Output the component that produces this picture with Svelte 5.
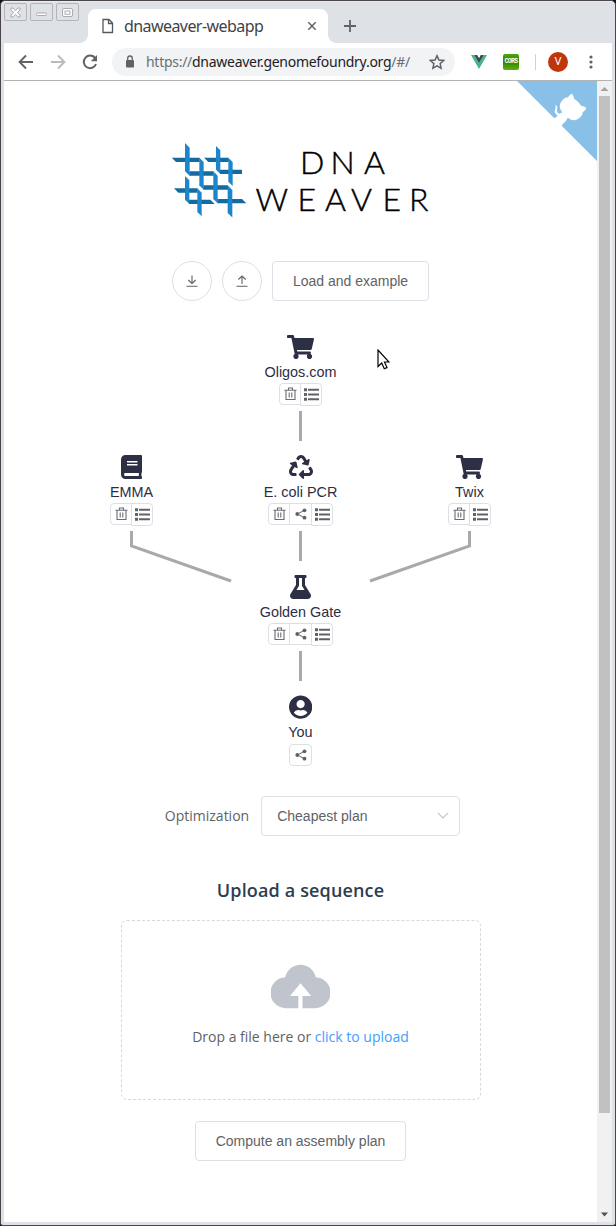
<script>
  const icons = {
    cart: { box: '0 0 576 512', w: 27, d: 'M528.12 301.319l47.273-208C578.806 78.301 567.391 64 551.99 64H159.208l-9.166-44.81C147.758 8.021 137.93 0 126.529 0H24C10.745 0 0 10.745 0 24v16c0 13.255 10.745 24 24 24h69.883l70.248 343.435C147.325 417.1 136 435.222 136 456c0 30.928 25.072 56 56 56s56-25.072 56-56c0-15.674-6.447-29.835-16.824-40h209.647C430.447 426.165 424 440.326 424 456c0 30.928 25.072 56 56 56s56-25.072 56-56c0-22.172-12.888-41.332-31.579-50.405l5.517-24.276c3.413-15.018-8.002-29.319-23.403-29.319H218.117l-6.545-32h293.145c11.206 0 20.92-7.754 23.403-18.681z' },
    book: { box: '0 0 448 512', w: 21, d: 'M448 360V24c0-13.3-10.7-24-24-24H96C43 0 0 43 0 96v320c0 53 43 96 96 96h328c13.3 0 24-10.7 24-24v-16c0-7.5-3.5-14.3-8.9-18.7-4.2-15.4-4.2-59.3 0-74.7 5.4-4.3 8.9-11.1 8.9-18.6zM128 134c0-3.3 2.7-6 6-6h212c3.3 0 6 2.7 6 6v20c0 3.3-2.7 6-6 6H134c-3.3 0-6-2.7-6-6v-20zm0 64c0-3.3 2.7-6 6-6h212c3.3 0 6 2.7 6 6v20c0 3.3-2.7 6-6 6H134c-3.3 0-6-2.7-6-6v-20zm253.4 250H96c-17.7 0-32-14.3-32-32 0-17.6 14.4-32 32-32h285.4c-1.9 17.1-1.9 46.9 0 64z' },
    recycle: { box: '0 0 512 512', w: 24, d: 'M184.561 261.903c3.232 13.997-12.123 24.635-24.068 17.168l-40.736-25.455-50.867 81.402C55.606 356.273 70.96 384 96.012 384H148c6.627 0 12 5.373 12 12v40c0 6.627-5.373 12-12 12H96.115c-75.334 0-121.302-83.048-81.408-146.88l50.822-81.388-40.725-25.448c-12.081-7.547-8.966-25.961 4.879-29.158l110.237-25.45c8.611-1.988 17.201 3.381 19.189 11.99l25.452 110.237zm98.561-182.915l41.289 66.076-40.74 25.457c-12.051 7.528-9 25.953 4.879 29.158l110.237 25.45c8.672 1.999 17.215-3.438 19.189-11.99l25.45-110.237c3.197-13.844-11.99-24.719-24.068-17.168l-40.687 25.424-41.263-66.082c-37.521-60.033-125.209-60.171-162.816 0l-17.963 28.766c-3.51 5.62-1.8 13.021 3.82 16.533l33.919 21.195c5.62 3.512 13.024 1.803 16.536-3.817l17.961-28.743c12.712-20.341 41.973-19.676 54.257-.022zM497.288 301.12l-27.515-44.065c-3.511-5.623-10.916-7.334-16.538-3.821l-33.861 21.159c-5.62 3.512-7.33 10.915-3.818 16.536l27.564 44.112c13.257 21.211-2.057 48.96-27.136 48.96H320V336.02c0-14.213-17.242-21.383-27.313-11.313l-80 79.981c-6.249 6.248-6.249 16.379 0 22.627l80 79.989C302.689 517.308 320 510.3 320 495.989V448h95.88c75.274 0 121.335-82.997 81.408-146.88z' },
    flask: { box: '0 0 448 512', w: 21, d: 'M437.2 403.5L320 215V64h8c13.3 0 24-10.7 24-24V24c0-13.3-10.7-24-24-24H120c-13.3 0-24 10.7-24 24v16c0 13.3 10.7 24 24 24h8v151L10.8 403.5C-18.5 450.6 15.3 512 70.9 512h306.2c55.7 0 89.4-61.5 60.1-108.5zM137.9 320l48.2-77.6c3.7-5.2 5.8-11.6 5.8-18.4V64h64v160c0 6.9 2.2 13.2 5.8 18.4l48.2 77.6h-172z' },
    user: { box: '0 0 496 512', w: 23.25, d: 'M248 8C111 8 0 119 0 256s111 248 248 248 248-111 248-248S385 8 248 8zm0 96c48.6 0 88 39.4 88 88s-39.4 88-88 88-88-39.4-88-88 39.4-88 88-88zm0 344c-58.7 0-111.3-26.6-146.5-68.2 18.8-35.4 55.6-59.8 98.5-59.8 2.4 0 4.8.4 7.1 1.1 13 4.2 26.6 6.9 40.9 6.9 14.3 0 28-2.7 40.9-6.9 2.3-.7 4.7-1.1 7.1-1.1 42.9 0 79.7 24.4 98.5 59.8C359.3 421.4 306.7 448 248 448z' }
  };
  const rows = [
    [{ name: 'Oligos.com', icon: 'cart', tools: ['trash', 'list'] }],
    [
      { name: 'EMMA', icon: 'book', tools: ['trash', 'list'] },
      { name: 'E. coli PCR', icon: 'recycle', tools: ['trash', 'share', 'list'] },
      { name: 'Twix', icon: 'cart', tools: ['trash', 'list'] }
    ],
    [{ name: 'Golden Gate', icon: 'flask', tools: ['trash', 'share', 'list'] }],
    [{ name: 'You', icon: 'user', tools: ['share'] }]
  ];
</script>

<div class="window">
  <header class="tabs">
    <div class="wm">
      <span><svg width="13" height="13" viewBox="0 0 13 13"><path d="M2 2h2l2.500 2.800L9 2h2v2L8.300 6.500 11 9v2H9L6.500 8.200 4 11H2V9l2.700-2.500L2 4z" /></svg></span>
      <span><svg width="13" height="13" viewBox="0 0 13 13"><rect x="1.500" y="7" width="10" height="2.500" rx="1" /></svg></span>
      <span><svg width="13" height="13" viewBox="0 0 13 13"><rect x="1.500" y="2.500" width="10" height="8" rx="1.500" /><rect x="4" y="5" width="5" height="3.200" /></svg></span>
    </div>
    <div class="tab">
      <svg class="doc" width="12" height="16" viewBox="0 0 12 16"><path d="M1 1.500h6L10.500 5v9.500H1zM6.500 1.500v4h4" fill="none" stroke="#54575b" stroke-width="1.300" /></svg>
      <span class="title">dnaweaver-webapp</span>
      <svg class="close" width="10" height="10" viewBox="0 0 10 10"><path d="M1.300 1.300l7.400 7.400M8.700 1.300L1.300 8.700" stroke="#5f6368" stroke-width="1.500" /></svg>
    </div>
    <svg class="plus" width="12" height="12" viewBox="0 0 12 12"><path d="M6 0v12M0 6h12" stroke="#5f6368" stroke-width="1.800" /></svg>
  </header>

  <nav class="toolbar">
    <svg width="16" height="16" viewBox="0 0 16 16"><path d="M15 8H2M8 1.500L1.600 8 8 14.500" fill="none" stroke="#5f6368" stroke-width="1.900" /></svg>
    <svg class="fwd" width="16" height="16" viewBox="0 0 16 16"><path d="M1 8h13M8 1.500L14.400 8 8 14.500" fill="none" stroke="#b9bbbe" stroke-width="1.900" /></svg>
    <svg class="reload" width="16" height="16" viewBox="0 0 16 16"><path d="M13.200 4.200A6.300 6.300 0 1 0 14 10" fill="none" stroke="#5f6368" stroke-width="2" /><path d="M15 1v6.200H8.800z" fill="#5f6368" /></svg>
    <div class="address">
      <svg class="lock" width="10" height="13" viewBox="0 0 10 13"><rect x="1" y="5" width="8" height="7.500" rx="1" fill="#5f6368" /><path d="M2.700 5.500V3.300a2.300 2.300 0 0 1 4.600 0v2.200" fill="none" stroke="#5f6368" stroke-width="1.300" /></svg>
      <span class="url">https://<b>dnaweaver.genomefoundry.org</b>/#/</span>
      <svg class="star" width="16" height="16" viewBox="0 0 24 24"><path d="M12 2.500l2.900 6.500 7.100.7-5.300 4.700 1.500 6.900-6.200-3.600-6.200 3.600 1.500-6.900L2 9.700 9.100 9z" fill="none" stroke="#5f6368" stroke-width="2.200" /></svg>
    </div>
    <svg class="vue" width="16" height="14" viewBox="0 0 16 14"><path d="M0 0h3.200L8 8.300 12.800 0H16L8 14z" fill="#41b883" /><path d="M3.200 0h3L8 3.200 9.800 0h3L8 8.300z" fill="#35495e" /></svg>
    <span class="cors">CORS</span>
    <i class="sep"></i>
    <span class="avatar">V</span>
    <svg class="dots" width="4" height="14" viewBox="0 0 4 14"><g fill="#5f6368"><circle cx="2" cy="2" r="1.600" /><circle cx="2" cy="7" r="1.600" /><circle cx="2" cy="12" r="1.600" /></g></svg>
  </nav>

  <div class="viewport">
    <main>
      <svg class="corner" width="80" height="80" viewBox="0 0 250 250">
        <path d="M0,0 L115,115 L130,115 L142,142 L250,250 L250,0 Z" fill="#89c0e8" />
        <path d="M128.300,109 C113.800,99.700 119,89.600 119,89.600 C122,82.700 120.500,78.600 120.500,78.600 C119.200,72 123.400,76.300 123.400,76.300 C127.300,80.900 125.500,87.300 125.500,87.300 C122.900,97.600 130.600,101.900 134.400,103.200" fill="#fff" />
        <path d="M115,115 C114.900,115.100 118.700,116.500 119.800,115.400 L133.700,101.600 C136.900,99.200 139.900,98.400 142.200,98.600 C133.800,88 127.500,74.400 143.800,58 C148.500,53.400 154,51.200 159.700,51 C160.300,49.400 163.200,43.600 171.400,40.100 C171.400,40.100 176.100,42.500 178.800,56.200 C183.100,58.600 187.200,61.800 190.900,65.400 C194.500,69 197.700,73.200 200.100,77.600 C213.800,80.200 216.300,84.900 216.300,84.900 C212.700,93.100 206.900,96 205.400,96.600 C205.100,102.400 203,107.800 198.300,112.500 C181.900,128.900 168.300,122.500 157.700,114.100 C157.900,116.900 156.700,120.900 152.700,124.900 L141,136.500 C139.800,137.700 141.600,141.900 141.800,141.800 Z" fill="#fff" />
      </svg>

      <svg class="logo" width="258" height="78" viewBox="172 142 258 78">
        <g transform="translate(160 130.300) scale(.3333)">
          <g fill="#156a9e">
            <path d="M35 82h84v13H48z" />
            <path d="M88 123h73v13H88z" />
            <path d="M130 165h74v13h-74z" />
            <path d="M172 206h74l13 13h-87z" />
            <path d="M132 82h74v13h-61z" />
            <path d="M180 118h66v13h-66z" />
            <path d="M42 174h71v13H55z" />
            <path d="M87 208h64l13 13H87z" />
          </g>
          <g fill="#1b86cb">
            <path d="M75 38l14 14v84l-14-13z" />
            <path d="M118 82l13 13v83l-13-13z" />
            <path d="M160 123l13 13v83l-13-13z" />
            <path d="M203 165l14 14v83l-14-14z" />
            <path d="M168 47l13 13v71l-13-13z" />
            <path d="M205 82l13 13v72l-13-13z" />
            <path d="M75 137l13 13v71l-13-13z" />
            <path d="M112 174l13 13v71l-13-13z" />
          </g>
        </g>
        <text y="174" x="300 330.500 364">DNA</text>
        <text y="211.300" x="255.500 297.500 325 351 382.500 409">WEAVER</text>
      </svg>

      <div class="actions">
        <button class="round" aria-label="Download"><svg width="12" height="12" viewBox="0 0 12 12"><path d="M6 .5v8M2.300 5L6 8.500 9.700 5M.5 11.300h11" /></svg></button>
        <button class="round" aria-label="Upload"><svg width="12" height="12" viewBox="0 0 12 12"><path d="M6 9V1M2.300 4.500L6 1l3.700 3.500M.5 11.300h11" /></svg></button>
        <button class="btn">Load and example</button>
      </div>

      <section class="graph">
        <svg class="edges" width="507" height="440" viewBox="47 335 507 440">
          <path d="M300.500 411v30M300.500 531v30M300.500 651v30M131.500 531v15l99.500 35M469.500 531v15l-99.500 35" />
        </svg>
        {#each rows as row}
          <div class="row">
            {#each row as node}
              <div class="node">
                <svg class="glyph" width={icons[node.icon].w} height="24" viewBox={icons[node.icon].box}><path d={icons[node.icon].d} /></svg>
                <span class="name">{node.name}</span>
                <div class="tools">
                  {#each node.tools as tool}
                    <button class={tool} aria-label={tool}>
                      {#if tool === 'trash'}
                        <svg width="13" height="14" viewBox="0 0 13 14"><path d="M.5 3.200h12M4.500 3V1h4v2M2 3.200v9.300h9V3.200M5.200 5.500v5M7.800 5.500v5" fill="none" stroke="#6a6c70" stroke-width="1.100" /></svg>
                      {:else if tool === 'share'}
                        <svg width="12" height="12" viewBox="0 0 12 12"><path d="M9.500 2.200L2.500 6l7 3.800" fill="none" stroke="#606266" stroke-width="1" /><g fill="#606266"><circle cx="9.500" cy="2.300" r="1.900" /><circle cx="2.300" cy="6" r="1.900" /><circle cx="9.500" cy="9.700" r="1.900" /></g></svg>
                      {:else}
                        <svg width="15" height="13" viewBox="0 0 15 13"><path d="M0 .3h3v3H0zM0 5h3v3H0zM0 9.700h3v3H0zM4 .8h11v2H4zM4 5.500h11v2H4zM4 10.200h11v2H4z" fill="#606266" /></svg>
                      {/if}
                    </button>
                  {/each}
                </div>
              </div>
            {/each}
          </div>
        {/each}
      </section>

      <div class="option">
        <span>Optimization</span>
        <div class="select">Cheapest plan<svg width="12" height="7" viewBox="0 0 12 7"><path d="M.8.8L6 6 11.200.8" fill="none" stroke="#c0c4cc" stroke-width="1.100" /></svg></div>
      </div>

      <h3>Upload a sequence</h3>
      <div class="drop">
        <svg width="59" height="45" viewBox="0 0 59 45"><path d="M14.300 13.200A15.500 15.500 0 0 1 44.700 13.200A15.500 15.500 0 0 1 43.500 44.200H31.500V32h8.700L29.500 19.300 19 32h8.300v12.200H15.500A15.500 15.500 0 0 1 14.300 13.200z" fill="#c0c4cc" /></svg>
        <p>Drop a file here or <em>click to upload</em></p>
      </div>
      <button class="btn compute">Compute an assembly plan</button>
      <svg class="cursor" width="13" height="21" viewBox="0 0 13 21"><path d="M1 1v16.500l3.700-3.500 2.600 5.800 2.700-1.200-2.500-5.600H12z" fill="#fff" stroke="#000" stroke-width="1.200" /></svg>
    </main>
    <aside>
      <svg width="15" height="15" viewBox="0 0 15 15"><path d="M3.500 10L7.500 6l4 4z" fill="#a3a3a3" /></svg>
      <div class="thumb"></div>
      <svg width="15" height="15" viewBox="0 0 15 15"><path d="M4 5.500h7l-3.500 4z" fill="#505050" /></svg>
    </aside>
  </div>
</div>

<style>
  :global(body) { margin: 0; background: #111; }
  * { box-sizing: border-box; }
  svg { display: block; flex: none; }
  button { display: flex; align-items: center; justify-content: center; padding: 0; margin: 0; background: #fff; border: 1px solid #dcdfe6; color: #606266; font: 14px "Liberation Sans", Arial, sans-serif; }
  .window { width: 616px; height: 1226px; padding: 0 3px 3px; border: 1px solid #4a4549; border-radius: 5px 5px 3px 3px; background: #dee1e6; display: flex; flex-direction: column; overflow: hidden; }
  .tabs { height: 42px; flex: none; display: flex; border-top: 1px solid #eee8f2; }
  .wm { display: flex; gap: 3px; padding-top: 1px; width: 84px; }
  .wm span { width: 23px; height: 18px; border: 1px solid #b3b4bb; border-radius: 2px; display: flex; align-items: center; justify-content: center; }
  .wm svg { fill: #fff; stroke: #a1a2a9; stroke-width: .9; }
  .tab { position: relative; width: 240px; margin-top: 7px; height: 34px; background: #fff; border-radius: 8px 8px 0 0; display: flex; align-items: center; padding: 0 11px 0 14px; }
  .tab::before, .tab::after { content: ""; position: absolute; bottom: 0; width: 8px; height: 8px; }
  .tab::before { left: -8px; background: radial-gradient(circle at 0 0, transparent 7.500px, #fff 8px); }
  .tab::after { right: -8px; background: radial-gradient(circle at 100% 0, transparent 7.500px, #fff 8px); }
  .title { margin-left: 10px; flex: 1; font: 16px/20px "Noto Sans", sans-serif; letter-spacing: -.57px; color: #3f4246; white-space: nowrap; }
  .plus { margin: 18px 0 0 16px; }
  .toolbar { height: 37px; flex: none; background: #fff; display: flex; align-items: center; padding-left: 14px; }
  .fwd, .reload { margin-left: 16px; }
  .address { width: 343px; height: 28px; margin-left: 14px; border-radius: 14px; background: #f1f3f4; display: flex; align-items: center; padding: 0 10px 0 13px; }
  .url { margin-left: 11px; flex: 1; font: 14px/20px "Noto Sans", sans-serif; letter-spacing: -.28px; color: #6b6f74; white-space: nowrap; }
  .url b { font-weight: 400; color: #202124; }
  .vue { margin-left: 16px; }
  .cors { margin-left: 16px; width: 16px; height: 16px; border-radius: 2px; background: linear-gradient(#49a70b, #2f8300 50%, #58b313); color: #fff; font: 700 6.500px/16px "Liberation Mono", monospace; letter-spacing: -.7px; text-align: center; }
  .sep { width: 1px; height: 16px; margin-left: 16px; background: #cfd1d5; }
  .avatar { width: 20px; height: 20px; margin-left: 12px; border-radius: 50%; background: #bf360c; color: #fff; font: 11px/20px Roboto, sans-serif; text-align: center; }
  .dots { margin-left: 21px; }
  .viewport { flex: 1; display: flex; background: #fff; border-top: 1px solid #b3b3b3; min-height: 0; }
  main { position: relative; width: 593px; display: flex; flex-direction: column; align-items: center; padding-top: 61px; }
  .corner { position: absolute; top: 0; right: 0; }
  .logo text { font: 300 32px Lato, sans-serif; fill: #000; stroke: #000; stroke-width: .45px; }
  .actions { display: flex; gap: 10px; margin-top: 41px; }
  .round { width: 40px; height: 40px; border-radius: 50%; }
  .round svg { fill: none; stroke: #606266; stroke-width: 1.100; }
  .btn { height: 40px; padding: 0 20px; border-radius: 4px; }
  .graph { position: relative; width: 507px; margin-top: 34px; height: 440px; }
  .edges { position: absolute; left: 0; top: 0; fill: none; stroke: #a9a9a9; stroke-width: 3; }
  .row { height: 120px; display: flex; justify-content: center; }
  .node { width: 169px; display: flex; flex-direction: column; align-items: center; }
  .glyph { fill: #2d2f45; }
  .name { font: 14.400px/18px "Liberation Sans", Arial, sans-serif; color: #2c2e44; margin-top: 4px; }
  .tools { display: flex; margin-top: 2px; align-items: flex-start; }
  .tools button { width: 22px; height: 22px; }
  .tools .trash { padding-left: 1px; }
  .tools .share { width: 23px; }
  .tools button + button { margin-left: -1px; }
  .tools button:first-child { border-radius: 4px 0 0 4px; }
  .tools button:last-child { border-radius: 0 4px 4px 0; }
  .tools .list { height: 23px; }
  .tools button:only-child { border-radius: 4px; margin-top: 1px; }
  .option { display: flex; align-items: center; gap: 12px; margin-top: 21px; transform: translateX(12px); font: 14px/20px "Open Sans", sans-serif; color: #606266; }
  .select { width: 199px; height: 40px; border: 1px solid #dcdfe6; border-radius: 4px; display: flex; align-items: center; justify-content: space-between; padding: 0 10px 0 15px; font: 14px "Liberation Sans", Arial, sans-serif; }
  .select svg { margin-bottom: 2px; }
  h3 { margin: 41px 0 0; font: 600 18px/26px "Open Sans", sans-serif; color: #2c3e50; letter-spacing: .15px; }
  .drop { width: 360px; height: 180px; margin-top: 17px; border: 1px dashed #d9d9d9; border-radius: 6px; display: flex; flex-direction: column; align-items: center; padding-top: 43px; }
  .drop p { margin: 18px 0 0; font: 14px/20px "Open Sans", sans-serif; color: #606266; }
  em { font-style: normal; color: #409eff; }
  .compute { margin-top: 21px; }
  .cursor { position: absolute; left: 373px; top: 268px; }
  aside { width: 15px; background: #f1f1f1; display: flex; flex-direction: column; align-items: center; }
  .thumb { width: 11px; height: 1017px; background: #c1c1c1; margin-bottom: auto; }
</style>
